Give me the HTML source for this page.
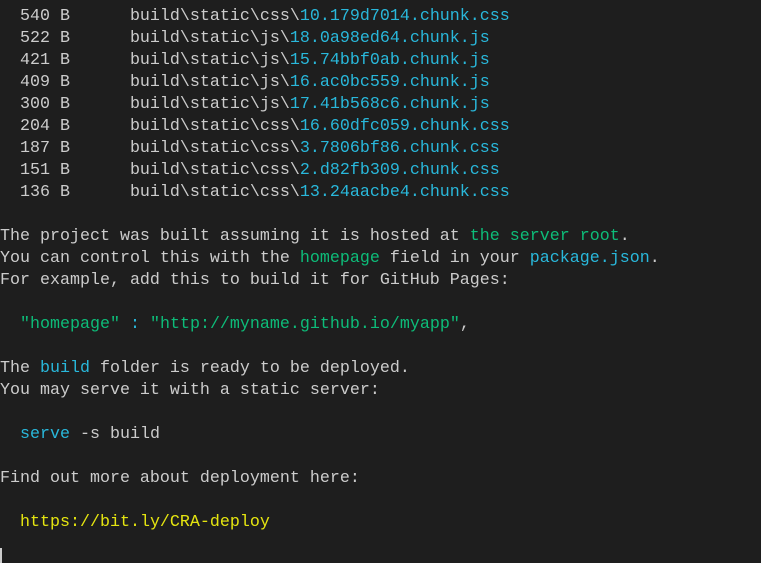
<!DOCTYPE html>
<html><head><meta charset="utf-8"><style>
html,body{margin:0;padding:0;background:#1e1e1e;width:761px;height:563px;overflow:hidden}
pre{margin:0;position:absolute;left:0;top:6px;font-family:"Liberation Mono",monospace;font-size:16.66px;line-height:22px;color:#cccccc;white-space:pre}
.b{color:#29b8db}.g{color:#0dbc79}.gg{color:#23d18b}.y{color:#e5e510}
.cur{position:absolute;left:0;top:548px;width:2px;height:15px;background:#cccccc}
</style></head><body>
<pre>  540 B      build\static\css\<span class="b">10.179d7014.chunk.css</span>
  522 B      build\static\js\<span class="b">18.0a98ed64.chunk.js</span>
  421 B      build\static\js\<span class="b">15.74bbf0ab.chunk.js</span>
  409 B      build\static\js\<span class="b">16.ac0bc559.chunk.js</span>
  300 B      build\static\js\<span class="b">17.41b568c6.chunk.js</span>
  204 B      build\static\css\<span class="b">16.60dfc059.chunk.css</span>
  187 B      build\static\css\<span class="b">3.7806bf86.chunk.css</span>
  151 B      build\static\css\<span class="b">2.d82fb309.chunk.css</span>
  136 B      build\static\css\<span class="b">13.24aacbe4.chunk.css</span>

The project was built assuming it is hosted at <span class="g">the server root</span>.
You can control this with the <span class="g">homepage</span> field in your <span class="b">package.json</span>.
For example, add this to build it for GitHub Pages:

  <span class="g">"homepage"</span> <span class="b">:</span> <span class="g">"http://myname.github.io/myapp"</span>,

The <span class="b">build</span> folder is ready to be deployed.
You may serve it with a static server:

  <span class="b">serve</span> -s build

Find out more about deployment here:

  <span class="y">https://bit.ly/CRA-deploy</span>
</pre>
<div class="cur"></div>
</body></html>
